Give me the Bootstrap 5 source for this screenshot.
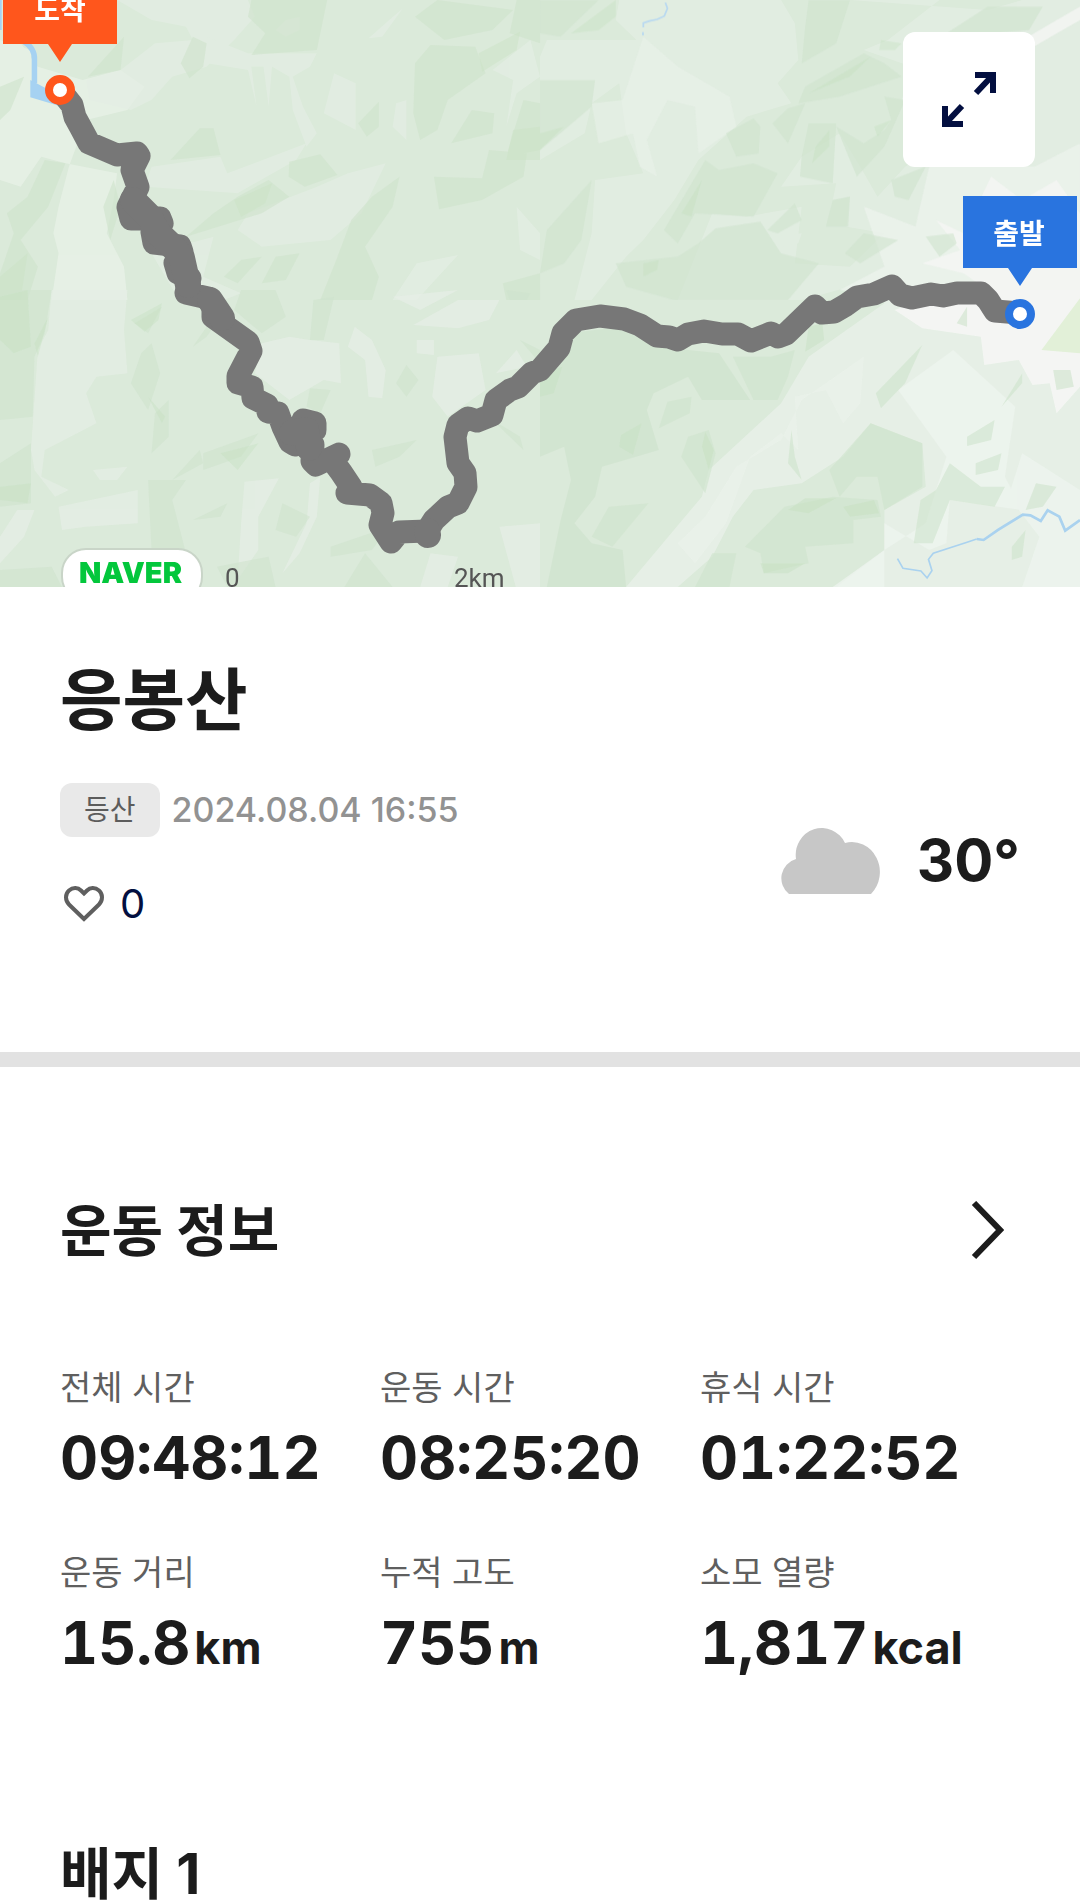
<!DOCTYPE html>
<html lang="ko">
<head>
<meta charset="utf-8">
<meta name="viewport" content="width=device-width, initial-scale=1">
<title>응봉산</title>
<link href="https://cdn.jsdelivr.net/npm/bootstrap@5.3.0/dist/css/bootstrap.min.css" rel="stylesheet">
<style>
body{font-family:Inter,"Noto Sans CJK KR",sans-serif;color:#1c1c1c;background:#fff}
.screen{scrollbar-width:none}
.screen::-webkit-scrollbar{display:none}
.pad-x{padding-left:60px;padding-right:60px}
.pin-text{font:700 28px "Noto Sans CJK KR",sans-serif;fill:#fff;text-anchor:middle}
.scale-text{font:400 26px Roboto,sans-serif;fill:#555}
.naver-text{font:900 29px Inter,sans-serif;fill:#03c73c}
.expand-btn{top:32px;right:45px;width:132px;height:135px;border-radius:12px}
.summary{padding-top:73px;padding-bottom:124px}
.peak-name{font-size:68px;line-height:80px;font-weight:700}
.tag-row,.like-btn{gap:12px;margin-top:43px}
.tag{font-size:28px;line-height:54px;padding:0 24px;border-radius:12px;background:#e9e9e9;color:#5c5c5c}
.stamp{font-size:34px;line-height:54px;font-weight:500;color:#929292}
.like-btn{font-size:40px;line-height:48px;color:#030f40}
.weather{gap:36px;margin-bottom:32px}
.temp{font-size:58px;line-height:72px;font-weight:700}
.divider{height:15px;background:#e2e2e2}
.sect-title{font-size:56px;line-height:80px;font-weight:700}
.info{padding-top:124px}
.stats{margin-top:89px;row-gap:46px}
.stat-label{font-size:34px;line-height:56px;font-weight:400;color:#5f5f5f}
.stat-value{font-size:59px;line-height:83px;font-weight:700;font-variant-numeric:tabular-nums}
.unit{font-size:45px;font-weight:700}
.badges{padding-top:145px}
</style>
</head>
<body>
<main class="screen vh-100 overflow-auto">
<section class="position-relative" aria-label="지도">
<svg class="d-block w-100 h-auto" viewBox="0 0 1080 587" role="img" aria-label="등산 경로">
<rect width="1080" height="587" fill="#dbeada"/>
<!-- upper left terrain -->
<g transform="scale(.3444 .3333)">
<g fill="#e9f2e8" opacity=".75">
<path d="M0 130L60 130L110 200L240 240L350 210L420 260L370 330L250 360L200 500L170 620L155 700L170 760L150 900L370 900L360 800L310 700L330 600L340 520L190 490L120 470L60 560L0 540Z"/>
<path d="M0 120L90 150L90 290L150 310L60 400L0 520Z"/>
</g>
<g fill="#e4eee4" opacity=".7">
<path d="M340 0L720 0L740 50L680 120L600 200L500 230L440 300L380 330L260 300L250 240L350 210L450 130L560 120L540 80L440 60Z"/>
<path d="M600 110L720 160L920 160L900 200L850 230L880 320L920 400L890 440L850 330L840 230L790 200L780 320L765 200L730 200L745 320L720 210L600 190Z"/>
<path d="M970 220L1033 250L1033 390L940 340ZM1180 300L1180 420L1140 380L1150 310ZM1170 25L1110 110L1070 115L1130 60ZM440 500L640 470L660 520L890 430L860 480L690 580L420 560ZM1120 490L1050 640L960 720L760 740L690 690L720 640L920 560L1010 520ZM830 60L870 50L870 90L830 110L800 90ZM1330 765L1210 900L1140 900L1210 790ZM1540 120L1568 230L1500 280L1470 380L1490 240L1430 210ZM440 760L620 710L590 830L700 880L650 900L520 900ZM1500 620L1568 700L1568 780L1510 750Z"/>
</g>
<g fill="#cfe3cd" opacity=".65">
<path d="M730 0L950 0L920 150L730 165L770 100L720 50ZM1270 0L1490 30L1430 90L1290 120L1205 50ZM1250 135L1380 140L1410 220L1300 300L1270 390L1220 420L1200 340L1205 190ZM1260 530L1400 535L1420 450L1530 460L1520 530L1400 600L1275 628ZM1370 330L1435 340L1430 400L1310 430ZM1100 305L1100 380L1065 410L1040 370ZM580 385L620 385L640 465L495 480ZM840 485L930 463L980 525L885 560L838 530ZM360 110L350 210L255 230ZM560 110L600 130L590 200L550 235L525 190ZM1160 530L1140 620L1060 740L1100 830L1080 900L930 900L980 770L1020 660L1080 590ZM780 540L840 590L760 640L540 710L620 640L690 590ZM130 480L190 490L140 620L60 720L110 800L80 900L0 900L0 820L40 700L20 640L80 590ZM760 770L690 850L650 830L700 780ZM870 760L830 840L760 850L800 770ZM330 540L350 620L320 720L300 620ZM1500 0L1568 0L1568 130L1480 100ZM1520 300L1568 310L1568 450L1470 470L1490 400ZM0 260L70 230L30 330L0 360ZM1460 850L1568 820L1568 900L1470 900Z"/>
</g>
<g fill="#c9e2c3" opacity=".45"><path d="M1390 160L1510 95L1500 150L1400 215ZM1490 390L1568 380L1568 480L1470 480ZM680 600L790 550L770 610L700 650ZM0 830L80 760L60 900L0 900Z"/></g>
<g fill="none" stroke="#a6d2f2"><path d="M70 125Q102 145 100 180V250" stroke-width="16"/><path d="M88 240L180 290V320L88 292Z" fill="#a6d2f2" stroke="none"/><path d="M0 0V90" stroke-width="10"/></g>
</g>
<!-- upper right terrain -->
<g transform="translate(540 0) scale(.3444 .3333)">
<g fill="#e4eee4" opacity=".75">
<path d="M230 0L700 0L740 70L750 180L690 250L730 310L600 350L460 480L390 600L300 720L250 770L150 900L100 900L150 700L160 540L300 520L250 400L230 250L150 310L130 400L0 480V170L20 120L280 120L220 60Z"/>
<path d="M900 0L1160 0L1010 120L940 150L1080 200L1050 300L1180 420L1060 500L980 590L930 500L870 400L760 470L700 560L860 550L850 600L900 590L890 680L1000 700L900 800L740 790L760 620L600 650L500 640L400 900L760 900L900 860L1568 900V0L1400 0L1300 30Z"/>
<path d="M670 710L760 700L750 730L690 745Z"/>
</g>
<g fill="#edf3ed" opacity=".8"><path d="M300 110L400 200L550 290L570 380L460 460L450 320L370 300L310 420L340 530L290 500L270 400L170 430L150 310L240 300Z" opacity=".6"/><path d="M1130 500L1437 500L1568 430V900H1100L870 870L1000 800L940 620L1090 680Z"/></g>
<path d="M1300 180L1568 20V60L1400 160ZM1310 530L1400 600L1500 540L1568 640V900H1340L1230 820L1110 790L1220 750L1150 660L1230 700Z" fill="#f5f6f4" opacity=".75"/>
<g fill="#cfe3cd" opacity=".6">
<path d="M0 0H170L60 110L0 100ZM0 240L160 240L150 320L70 390L0 450ZM150 540L120 720L70 790L0 820L20 690ZM480 480L520 510L620 490L690 520L620 650L450 640L400 730L360 690ZM620 355L640 380L635 460L570 470L540 400ZM770 310L720 430L675 370L720 325ZM760 470L780 370L860 370L850 550L755 530ZM780 0L900 0L860 130L760 190L770 80ZM940 160L1000 190L1050 230L870 290L750 310L770 260ZM860 380L940 430L1000 390L1020 360L1000 290L1060 300L1000 440L920 530L900 480ZM1020 540L1120 500L1070 600L1030 590ZM900 590L895 680L830 680L850 600ZM510 685L640 665L700 760L810 790L720 900L390 900L250 860L220 790L400 770L460 730ZM940 700L1040 720L930 790L885 760ZM1120 710L1200 700L1210 730L1160 770ZM1180 100L1300 20L1460 20L1420 90L1300 100ZM740 610L760 660L690 700L660 690Z"/>
</g>
<g fill="#c6e0c0" opacity=".4"><path d="M90 100L220 0V50L170 90ZM800 440L840 390L840 440L790 490ZM990 120L1050 130L1030 150L985 150ZM300 790L345 780L340 810L300 830ZM970 380L1020 360L980 410ZM780 280L960 170L900 230ZM0 400L70 380L0 450ZM410 640L470 540L440 650Z"/></g>
<path d="M364 8L370 25L361 48L340 58L318 63L300 69V82M299 96V106" fill="none" stroke="#b9d9f0" stroke-width="5"/>
</g>
<!-- lower left terrain -->
<g transform="translate(0 290) scale(.3444 .3333)">
<g fill="#e5eee5" opacity=".75">
<path d="M150 0H370L360 120L370 250L280 260L250 310L280 400L130 480L120 560L200 600L160 620L100 540L90 480L110 180L140 120Z"/>
<path d="M760 160L840 140L900 150L985 160L990 280L940 270L840 330L740 250ZM1030 110L1080 150L1120 240L1110 325L1070 320L1060 210L1010 170ZM1200 105L1330 30L1450 30L1420 90L1330 115ZM1210 150L1260 150L1260 195L1210 190ZM1270 200L1390 190L1410 300L1300 380L1255 320ZM710 575L810 565L750 680L750 780L690 870L700 700ZM900 580L930 560L920 680L870 790L820 850L890 700ZM170 650L400 600L400 700L250 710L180 720ZM1450 710L1568 700V900H1500ZM1140 20L1330 0L1220 60ZM270 540L370 530L340 570L290 570ZM1250 790L1330 800L1300 891H1220ZM1500 180L1530 230L1440 250ZM50 660L100 660L70 740L0 820V740Z"/>
</g>
<g fill="#cfe3cd" opacity=".6">
<path d="M0 0H150L130 130L100 200L95 380L0 390ZM440 160L465 250L430 360L380 280L410 190ZM490 330L490 440L440 490L450 370ZM0 520L90 460L90 640L0 650ZM910 30L970 20L940 150L900 150ZM1180 225L1215 270L1180 320L1150 280ZM900 295L960 300L930 370L890 350ZM1430 390L1510 440L1520 480ZM430 570L540 570L500 630L540 790L440 780ZM590 490L750 430L700 500L590 540ZM820 640L900 680L860 740L800 720ZM660 640L640 680L560 690ZM960 770L1130 710L1080 780L960 800ZM1060 790L1140 891H1000ZM1470 0L1540 10L1530 30L1480 30ZM1510 150L1568 180V220ZM0 840L150 830L180 891H0ZM640 80L600 140L560 170L600 110ZM700 0H800L830 80L760 130L680 60ZM390 100L470 50L430 130ZM580 480L590 520L500 570ZM630 830L780 800L800 891H660ZM1080 480L1210 450L1160 500L1090 530Z"/>
</g>
<g fill="#c6e0c0" opacity=".4"><path d="M0 20L80 0L90 170L40 190L0 150ZM640 490L750 460L690 540ZM0 590L90 580L80 640L0 630ZM380 90L470 40L460 90L420 125ZM430 320L480 380L470 400ZM100 160L140 80L110 200Z"/></g>
</g>
<!-- lower right terrain -->
<g transform="translate(540 290) scale(.3444 .3333)">
<path d="M80 130L240 110L340 170L520 190L610 330L470 330L430 260L330 310L310 360L345 480L180 530L160 620L100 700L150 760L240 780L250 891H20L60 690L90 570L70 470L0 500V270Z" fill="#cfe3cd" opacity=".7"/>
<path d="M1000 40L780 200L700 340L490 540L470 620L250 891H400L500 800L560 680L620 600L760 580L880 500L960 400L1110 460L1120 590L1000 660L1000 780L860 891H1568V0H1000Z" fill="#e7f0e7" opacity=".85"/>
<g fill="#eef4ef" opacity=".75"><path d="M940 200L760 330L700 450L570 530L480 680L400 760L450 820L540 700L610 500L700 430L750 480L740 320L830 300L880 400L930 340Z" opacity=".6"/><path d="M1200 180L1380 350L1350 560L1400 660L1190 630L1180 760L1130 780L1000 700V891H850L1000 780L1120 700L1180 500L1040 300ZM1400 490L1568 600V891H1400L1450 740L1360 620Z"/></g>
<path d="M1030 60L1190 0H1568V290L1500 370L1480 280L1430 285L1390 210L1290 225L1280 140L1110 115Z" fill="#f5f6f4" opacity=".9"/>
<g fill="#cfe3cd" opacity=".62">
<path d="M960 400L1110 460V590L1000 660L980 560L920 560L870 620L840 540ZM1110 165L1060 280L990 355L975 310ZM1320 390L1310 450L1240 468L1240 440ZM1340 490L1330 540L1265 555V520ZM1190 520L1280 590L1350 590L1320 650L1190 630L1140 760L1085 760L1105 630L1150 600ZM850 620L980 630L990 680L910 690L910 760L770 770L780 820L650 850L640 790L595 770L710 650ZM490 420L510 490L480 610L410 500L430 440ZM440 320L435 370L345 415L370 335ZM200 650L315 640L210 770L150 740ZM670 200L740 180L720 260L690 330L620 330L560 200ZM1240 50V110L1210 100ZM1400 250L1400 280L1340 350ZM1540 240L1550 290L1500 300L1490 240ZM1440 580L1500 590L1460 650L1410 660ZM1410 720L1400 800L1370 810V770ZM730 420L740 500L760 570L720 520ZM500 790L570 790L550 891H450Z"/>
</g>
<g fill="#c6e0c0" opacity=".45"><path d="M295 400L270 495L230 470L235 435ZM860 625L780 670L720 660L770 625ZM970 630L985 670L900 680L880 650ZM480 425L505 480L490 540L470 470ZM0 250L65 230L40 310L0 320ZM640 820L770 820L720 850L650 850ZM780 110L820 100L825 150L770 185Z"/></g>
<path d="M1456 180L1568 25V190Z" fill="#e2f0d8"/>
<g fill="none" stroke="#aad2ef" stroke-width="6"><path d="M1038 806L1054 835L1106 843L1124 864L1138 842L1128 808L1142 790L1240 757L1268 747" stroke-width="5"/><path d="M1268 747L1288 750L1330 720L1402 674L1424 676L1454 693L1474 661L1508 680L1525 722L1568 690" stroke-width="8"/></g>
</g>
<!-- hiking route -->
<g fill="none" stroke="#777" stroke-linejoin="round" stroke-linecap="round">
<path d="M60 90L72 105L75 117L81 128L89 143L117 155L137 153L139 156L132 170L138 187L128 207L131 219L160 218L162 223L152 232L154 243L180 246L182 252L175 263L178 273L190 278L186 293L208 298L213 307L213 317L248 342L251 351L238 376L238 383L252 387L253 398L267 405L268 412L278 413L283 427L290 442L295 445L303 420L315 423L315 430L300 436L313 445L312 461L316 465L339 454L332 460L341 472L351 487L347 493L370 495L381 503L383 513L380 525L391 542L399 532L427 531L434 520L448 507L458 503L466 487L465 473L458 463L455 437L458 425L468 418L477 421L492 415L496 400L510 390L518 387L532 373L540 370L559 348L563 333L576 320L600 316L624 319L640 325L657 336L669 337L678 340L688 334L704 331L722 334L738 334L751 341L771 333L778 337L786 334L815 306L822 313L834 312L846 305L857 297L874 294L892 286L900 295L912 298L931 294L943 296L957 293L981 293L988 300L995 311L1020 313" stroke-width="23"/>
<path d="M133 200L150 217L157 232L176 250M182 258L188 285M210 300L222 318M292 433L306 430L309 448M427 531L428 535" stroke-width="26"/>
</g>
<path d="M3 -28H117V44H72L60 62L48 44H3Z" fill="#ff561c"/>
<circle cx="60" cy="90" r="11" fill="#fff" stroke="#ff561c" stroke-width="8"/>
<path d="M963 196H1077V268H1032L1020 286L1008 268H963Z" fill="#2974df"/>
<circle cx="1020" cy="314" r="11" fill="#fff" stroke="#2974df" stroke-width="8"/>
<text class="pin-text" x="60" y="20">도착</text>
<text class="pin-text" x="1019" y="244">출발</text>
<rect x="62" y="549" width="140" height="52" rx="24" fill="#fff" stroke="#c9d5c8" stroke-width="2"/>
<text class="naver-text" x="79" y="583">NAVER</text>
<text class="scale-text" x="225" y="587">0</text>
<text class="scale-text" x="454" y="587">2km</text>
</svg>
<button type="button" class="expand-btn btn btn-light bg-white border-0 p-0 position-absolute d-flex align-items-center justify-content-center" aria-label="지도 확대">
<svg width="54" height="55" viewBox="0 0 54 55" fill="none" stroke="#030f40" stroke-width="6"><path d="M33 3H51V21M50 4L34 21M21 52H3V34M4 51L20 34"/></svg>
</button>
</section>

<section class="summary pad-x d-flex align-items-end justify-content-between">
<div>
<h1 class="peak-name mb-0">응봉산</h1>
<div class="tag-row d-flex align-items-center">
<span class="tag">등산</span><time class="stamp" datetime="2024-08-04T16:55">2024.08.04 16:55</time>
</div>
<button type="button" class="like-btn btn border-0 p-0 d-flex align-items-center" aria-label="좋아요 0">
<svg width="48" height="40" viewBox="0 0 48 40" fill="none" stroke="#5f5f5f" stroke-width="4"><path d="M24 35L9 20.500C5 16.500 5 10 9 6.500C13 3 18 3.500 21 6.500L24 9.500L27 6.500C30 3.500 35 3 39 6.500C43 10 43 16.500 39 20.500Z"/></svg>
<span>0</span>
</button>
</div>
<div class="weather d-flex align-items-center">
<svg width="100" height="68" viewBox="0 0 100 68" role="img" aria-label="흐림" fill="#c7c7c7"><path d="M8 68A20 20 0 0 1 15 33A26 27 0 0 1 64 17A28 30 0 0 1 90 68Z"/></svg>
<span class="temp">30°</span>
</div>
</section>

<div class="divider"></div>

<section class="info pad-x">
<a href="#info" class="d-flex align-items-center justify-content-between text-reset text-decoration-none">
<h2 class="sect-title mb-0">운동 정보</h2>
<svg class="me-3" width="34" height="60" viewBox="0 0 34 60" fill="none" stroke="#1c1c1c" stroke-width="6"><path d="M4 2L30 29L4 56"/></svg>
</a>
<dl class="stats row gx-0 mb-0" id="info">
<div class="col-4"><dt class="stat-label">전체 시간</dt><dd class="stat-value mb-0">09:48:12</dd></div>
<div class="col-4"><dt class="stat-label">운동 시간</dt><dd class="stat-value mb-0">08:25:20</dd></div>
<div class="col-4"><dt class="stat-label">휴식 시간</dt><dd class="stat-value mb-0">01:22:52</dd></div>
<div class="col-4"><dt class="stat-label">운동 거리</dt><dd class="stat-value mb-0 d-flex align-items-baseline gap-1">15.8<span class="unit">km</span></dd></div>
<div class="col-4"><dt class="stat-label">누적 고도</dt><dd class="stat-value mb-0 d-flex align-items-baseline gap-1">755<span class="unit">m</span></dd></div>
<div class="col-4"><dt class="stat-label">소모 열량</dt><dd class="stat-value mb-0 d-flex align-items-baseline gap-1">1,817<span class="unit">kcal</span></dd></div>
</dl>
</section>
<section class="badges pad-x">
<h2 class="sect-title mb-0">배지 1</h2>
</section>
</main>
<script src="https://cdn.jsdelivr.net/npm/bootstrap@5.3.0/dist/js/bootstrap.bundle.min.js"></script>
</body>
</html>
